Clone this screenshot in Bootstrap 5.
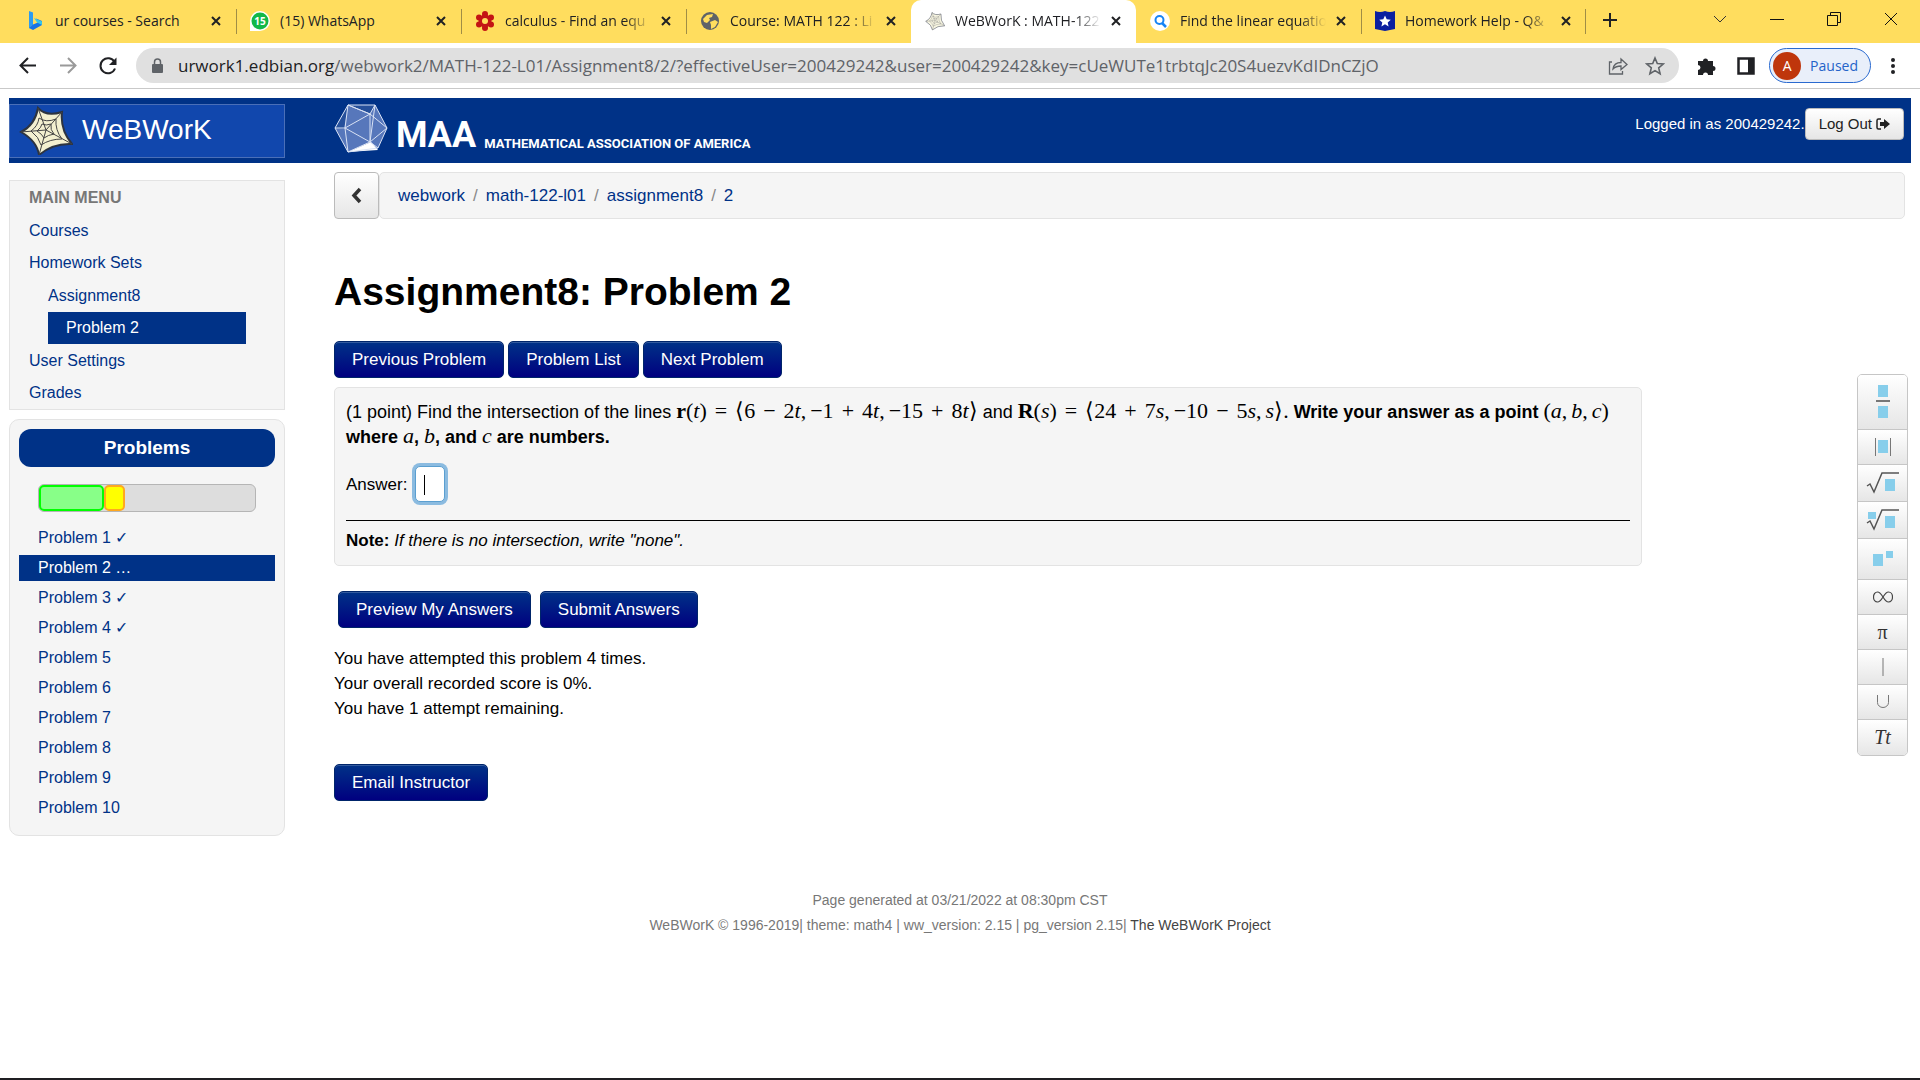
<!DOCTYPE html>
<html lang="en">
<head>
<meta charset="utf-8">
<meta name="viewport" content="width=device-width, initial-scale=1">
<title>WeBWorK : MATH-122-L01 : Assignment8 : 2</title>
<link href="https://cdn.jsdelivr.net/npm/bootstrap@5.3.0/dist/css/bootstrap.min.css" rel="stylesheet">
<style>
  :root { --navy: #003287; }
  body { font-family: "Liberation Sans", Arial, sans-serif; font-size: 17px; line-height: 25px; color: #000; background: #fff; border-bottom: 2px solid #1f1e22; }
  a { color: var(--navy); text-decoration: none; }
  svg { display: block; flex: none; }

  /* browser frame */
  .chrome-ui { font-family: "Open Sans", "Noto Sans", sans-serif; color: #202124; }
  .chrome-ui button { background: none; border: 0; padding: 0; color: inherit; }
  .tab-strip { background: #ffdd5e; height: 43px; padding-left: 11px; }
  .tab-item { flex: 0 1 225px; min-width: 0; gap: 10px; padding: 0 15px 2px 14px; height: 43px; font-size: 14px; position: relative; }
  .tab-item + .tab-item:not(.current):not(.after-current)::before, .tab-item.closing::after { content: ""; position: absolute; left: 0; top: 9px; height: 25px; width: 1px; background: #a08d45; }
  .tab-item.closing::after { left: auto; right: 0; }
  .tab-item.current { background: #fff; border-radius: 10px 10px 0 0; }
  .tab-title { flex: 1 1 0; overflow: hidden; white-space: nowrap; }
  .tab-title.fades { -webkit-mask-image: linear-gradient(90deg, #000 82%, transparent); mask-image: linear-gradient(90deg, #000 82%, transparent); }
  .window-keys { gap: 43px; padding: 0 22px 6px 0; }
  .tool-row { height: 46px; padding: 0 17px 0 18px; border-bottom: 1px solid #c9c9c9; }
  .nav-keys { gap: 20px; margin-right: 18px; }
  .address { background: #e0e0e0; border-radius: 18px; height: 35px; padding: 0 14px; gap: 13px; }
  .address-text { font-size: 17px; color: #5f6368; white-space: nowrap; overflow: hidden; }
  .address-text b { font-weight: 400; color: #202124; }
  .tool-keys { gap: 20px; margin-left: 17px; }
  .chrome-ui .profile { background: #e9effa; border: 1px solid #2a6ad0; border-radius: 18px; height: 35px; padding: 0 12px 0 3px; gap: 9px; color: #2463c9; font-size: 14px; margin: 0 -8px 0 -7px; }
  .avatar { width: 28px; height: 28px; border-radius: 50%; background: #bf360c; color: #fff; line-height: 28px; }

  /* masthead */
  .page { padding: 9px 9px 0; }
  .masthead { background: var(--navy); height: 65px; padding-right: 7px; }
  .side-w { width: 276px; flex: none; }
  .brand { background: #1147ad; border: 1px solid #4a6fb8; height: 54px; padding: 0 0 2px 8px; gap: 8px; color: #fff; font-size: 28px; }
  .maa { margin-left: 49px; color: #fff; gap: 8px; font-family: Roboto, sans-serif; font-weight: 700; padding-bottom: 3px; }
  .maa-big { font-size: 36px; line-height: 38px; }
  .maa-long { font-size: 13px; line-height: 20px; }
  .login { color: #fff; font-size: 15px; padding-bottom: 14px; }
  .btn-plain { background: linear-gradient(#fff, #e6e6e6); border: 1px solid #bbb; border-radius: 4px; color: #222; }
  .btn-out { font-size: 15px; line-height: 20px; padding: 5px 13px; }

  /* side navigation */
  .well-box { background: #f5f5f5; border: 1px solid #e3e3e3; }
  .main-menu { margin-top: 17px; font-size: 16px; padding-top: 1px; }
  .main-menu h2 { font-size: 16px; line-height: 32px; margin: 0 0 1px; padding-left: 19px; font-weight: 700; color: #777; }
  .main-menu a { display: block; line-height: 32px; padding-left: 19px; }
  .main-menu ul ul { margin: 1px 38px 1px 38px; }
  .main-menu ul ul a { padding-left: 0; }
  .main-menu ul ul a.here { padding-left: 18px; }
  a.here { background: var(--navy); color: #fff; }
  .problem-box { margin-top: 9px; border-radius: 10px; padding: 9px 9px 10px; font-size: 16px; }
  .problem-box h2 { background: var(--navy); color: #fff; font-size: 19px; line-height: 38px; font-weight: 700; border-radius: 12px; margin: 0 0 17px; text-align: center; }
  .meter { margin: 0 19px 13px; height: 28px; background: #ddd; border: 1px solid #b5b5b5; border-radius: 6px; }
  .meter div { border: 2px solid #0f0; background: #8f8; border-radius: 5px; }
  .meter div + div { border-color: #ffa81f; background: #ff0; }
  .problem-box a { display: block; line-height: 26px; margin-bottom: 4px; padding-left: 19px; }

  /* main column */
  .main-col { margin-left: 49px; padding-top: 9px; min-width: 0; }
  .btn-back { width: 45px; height: 47px; }
  .trail { border-radius: 5px; height: 47px; padding: 0 18px; line-height: 45px; margin: 0 6px 0 0; }
  .trail .breadcrumb-item + .breadcrumb-item { padding-left: 8px; }
  .trail .breadcrumb-item + .breadcrumb-item::before { padding-right: 8px; color: #888; }
  h1.set-title { font-size: 39px; line-height: 48px; font-weight: 700; margin: 49px 0 25px; }
  .btn-navy { background: linear-gradient(#003287, #000080); border: 1px solid #00256a; border-radius: 5px; color: #fff; font-size: 17px; line-height: 25px; padding: 5px 17px; box-shadow: inset 0 1px 0 rgba(255,255,255,.2); }
  .btn-navy:hover, .btn-navy:focus { color: #fff; background: linear-gradient(#003287, #000080); }
  .nav-row { gap: 4px; }
  .statement { margin: 9px 0 25px; padding: 12px 11px; border-radius: 5px; }
  .question { font-size: 18px; }
  .math { font-family: "Liberation Serif", serif; font-size: 22px; line-height: 20px; white-space: nowrap; font-weight: 400; }
  .math s { text-decoration: none; margin: 0 8px; }
  .math u { text-decoration: none; margin-right: 4px; }
  .answer-row { margin-top: 16px; gap: 5px; }
  .answer-box { width: 30px; height: 36px; border: 1px solid #5b9fd0; border-radius: 5px; outline: 0; box-shadow: 0 0 0 3px #8bbbe0; background: linear-gradient(#000, #000) 8px 8px / 1px 20px no-repeat #fff; padding: 4px; margin: 0 3px; }
  .statement hr { margin: 18px 0 7px; border-top: 1px solid #000; opacity: 1; }
  .send-row { gap: 9px; padding-left: 4px; margin-bottom: 18px; }
  .attempts { margin-bottom: 43px; }

  /* equation palette */
  .palette { width: 51px; flex: none; margin: 33px 3px 0 215px; align-self: flex-start; border: 1px solid #c6c6c6; border-radius: 5px; overflow: hidden; }
  .palette button { border: 0; border-bottom: 1px solid #c6c6c6; background: linear-gradient(#fff, #e6e6e6); padding: 0; height: 35px; color: #333; display: flex; align-items: center; justify-content: center; font-family: "Liberation Serif", serif; font-size: 20px; }
  .palette button:last-child { border-bottom: 0; }
  .palette .tall { height: 55px; }
  .palette .mid { height: 37px; }
  .palette .sup { height: 41px; }
  .credits { color: #777; font-size: 14px; margin-top: 52px; }
  .credits a { color: #444; }
</style>
</head>
<body class="d-flex flex-column min-vh-100">

<svg width="0" height="0" class="position-absolute" aria-hidden="true">
  <symbol id="cross" viewBox="0 0 10 10"><path d="M1 1l8 8M9 1L1 9" stroke="#202124" stroke-width="2" fill="none"/></symbol>
  <symbol id="web" viewBox="0 0 54 52">
    <path d="M19 3Q27 12 43 7Q41 25 53 39Q34 38 20 50Q18 36 2 27Q16 20 19 3Z" fill="#f3f0d0" stroke="#2d3440" stroke-width="2"/>
    <path d="M19 3L27 25L43 7M27 25L53 39M27 25L20 50M27 25L2 27M20 13Q27 18 37 14Q36 25 43 34Q31 34 22 40Q20 32 12 26Q19 21 20 13M23 19Q27 21 32 19Q31 25 35 29Q29 30 25 33Q23 29 18 26Q22 23 23 19" fill="none" stroke="#444" stroke-width="1"/>
  </symbol>
</svg>

<header class="chrome-ui">
  <div class="tab-strip d-flex">
    <div class="tab-item d-flex align-items-center">
      <svg width="20" height="22" viewBox="0 0 20 22"><path d="M4 1l4 1.500v12l-4 4z" fill="#2d9cf0"/><path d="M4 18l4-3.500 5-2-2-4 6 2.500v4L8 20z" fill="#1673e6"/><path d="M9 8l8 3.500V15l-5-2.500z" fill="#37c6e8"/></svg>
      <span class="tab-title">ur courses - Search</span><button aria-label="Close"><svg width="10" height="10"><use href="#cross"/></svg></button>
    </div>
    <div class="tab-item d-flex align-items-center">
      <svg width="20" height="20" viewBox="0 0 20 20"><path d="M0 20V10A10 10 0 1 1 10 20z" fill="#fff"/><circle cx="10" cy="10" r="8.500" fill="#12b848"/><text x="10" y="14" font-size="10" font-weight="700" fill="#fff" text-anchor="middle">15</text></svg>
      <span class="tab-title">(15) WhatsApp</span><button aria-label="Close"><svg width="10" height="10"><use href="#cross"/></svg></button>
    </div>
    <div class="tab-item d-flex align-items-center">
      <svg width="20" height="20" viewBox="0 0 20 20"><g fill="#c41414"><circle cx="10" cy="3" r="3"/><circle cx="10" cy="17" r="3"/><circle cx="4" cy="6.500" r="3"/><circle cx="16" cy="6.500" r="3"/><circle cx="4" cy="13.500" r="3"/><circle cx="16" cy="13.500" r="3"/><circle cx="10" cy="10" r="6.500"/></g><circle cx="10" cy="10" r="3" fill="#ffdd5e"/></svg>
      <span class="tab-title fades">calculus - Find an equ</span><button aria-label="Close"><svg width="10" height="10"><use href="#cross"/></svg></button>
    </div>
    <div class="tab-item d-flex align-items-center">
      <svg width="20" height="20" viewBox="0 0 20 20"><circle cx="10" cy="10" r="9" fill="#5f6368"/><path d="M3 8l4-4 6-1-1 3-3 1 1 2-3 3-3-1zM10 11l5-2 3 2-3 5-4 2v-4z" fill="#ffdd5e"/></svg>
      <span class="tab-title fades">Course: MATH 122 : Li</span><button aria-label="Close"><svg width="10" height="10"><use href="#cross"/></svg></button>
    </div>
    <div class="tab-item current d-flex align-items-center">
      <svg width="20" height="20" opacity=".65"><use href="#web"/></svg>
      <span class="tab-title fades">WeBWorK : MATH-122</span><button aria-label="Close"><svg width="10" height="10"><use href="#cross"/></svg></button>
    </div>
    <div class="tab-item after-current d-flex align-items-center">
      <svg width="20" height="20" viewBox="0 0 20 20"><circle cx="10" cy="10" r="10" fill="#fff"/><circle cx="9.500" cy="9" r="4" fill="none" stroke="#1683f5" stroke-width="2"/><path d="M12 12l4 4" stroke="#1683f5" stroke-width="2.500"/></svg>
      <span class="tab-title fades">Find the linear equatio</span><button aria-label="Close"><svg width="10" height="10"><use href="#cross"/></svg></button>
    </div>
    <div class="tab-item closing d-flex align-items-center">
      <svg width="20" height="20" viewBox="0 0 20 20"><path d="M0 0q5 2 10 0 5 2 10 0v18l-10 2-10-2z" fill="#0b1fa0"/><path d="M10 4.500l1.700 3.800 4.100.4-3.100 2.700.9 4-3.600-2.100-3.600 2.100.9-4-3.100-2.700 4.100-.4z" fill="#fff"/></svg>
      <span class="tab-title fades">Homework Help - Q&amp;</span><button aria-label="Close"><svg width="10" height="10"><use href="#cross"/></svg></button>
    </div>
    <button aria-label="New tab" class="ms-3 pb-1"><svg width="16" height="16" viewBox="0 0 16 16"><path d="M8 1v14M1 8h14" stroke="#202124" stroke-width="2"/></svg></button>
    <div class="window-keys d-flex ms-auto">
      <button aria-label="Search tabs"><svg width="14" height="14" viewBox="0 0 14 14"><path d="M1 4l6 6 6-6" fill="none" stroke="#333"/></svg></button>
      <button aria-label="Minimize"><svg width="14" height="14" viewBox="0 0 14 14"><path d="M0 7.500h14" stroke="#111"/></svg></button>
      <button aria-label="Restore"><svg width="14" height="14" viewBox="0 0 14 14"><path d="M.5 3.500h10v10H.5zM3.500 3.500v-3h10v10h-3" fill="none" stroke="#111"/></svg></button>
      <button aria-label="Close window"><svg width="14" height="14" viewBox="0 0 14 14"><path d="M1 1l12 12M13 1L1 13" stroke="#111"/></svg></button>
    </div>
  </div>
  <div class="tool-row d-flex align-items-center">
    <div class="nav-keys d-flex">
      <button aria-label="Back"><svg width="20" height="20" viewBox="0 0 20 20"><path d="M18 9.500H3M10 2L2.500 9.500 10 17" fill="none" stroke="#202124" stroke-width="2"/></svg></button>
      <button aria-label="Forward"><svg width="20" height="20" viewBox="0 0 20 20"><path d="M2 9.500h15M10 2l7.500 7.500L10 17" fill="none" stroke="#9a9a9a" stroke-width="2"/></svg></button>
      <button aria-label="Reload"><svg width="20" height="20" viewBox="0 0 20 20"><path d="M16.500 6A7.500 7.500 0 1 0 17 12.500" fill="none" stroke="#202124" stroke-width="2"/><path d="M18.500 1.500v7.500H11z" fill="#202124"/></svg></button>
    </div>
    <div class="address d-flex align-items-center flex-fill">
      <svg width="15" height="16" viewBox="0 0 15 16"><rect x="2" y="6" width="11" height="9" rx="1" fill="#5f6368"/><path d="M4.500 7V4a3 3 0 0 1 6 0v3" fill="none" stroke="#5f6368" stroke-width="1.500"/></svg>
      <div class="address-text flex-fill" role="textbox" aria-label="Address"><b>urwork1.edbian.org</b>/webwork2/MATH-122-L01/Assignment8/2/?effectiveUser=200429242&amp;user=200429242&amp;key=cUeWUTe1trbtqJc20S4uezvKdIDnCZjO</div>
      <button aria-label="Share"><svg width="20" height="18" viewBox="0 0 20 18"><path d="M4 5H1.500v12h13v-3M5 12q1-6.500 8-6.500V2l6 5.500-6 5V9q-5 0-8 3z" fill="none" stroke="#5f6368" stroke-width="1.300"/></svg></button>
      <button aria-label="Bookmark" class="ms-1"><svg width="20" height="20" viewBox="0 0 20 20"><path d="M10 2l2.300 5.500 6 .5-4.600 3.900 1.400 5.800L10 14.600l-5.100 3.100 1.400-5.800L1.700 8l6-.5z" fill="none" stroke="#5f6368" stroke-width="1.600"/></svg></button>
    </div>
    <div class="tool-keys d-flex align-items-center">
      <button aria-label="Extensions"><svg width="20" height="20" viewBox="0 0 20 20"><path d="M2 5h5a2.500 2.500 0 1 1 5 0h5v5a2.500 2.500 0 1 1 0 5v4h-5a2.500 2.500 0 0 0-5 0H2v-5a2.500 2.500 0 0 0 0-5z" fill="#202124"/></svg></button>
      <button aria-label="Side panel"><svg width="20" height="20" viewBox="0 0 20 20"><rect x="2.500" y="2.500" width="15" height="15" fill="none" stroke="#202124" stroke-width="2.500"/><path d="M12 2h6v16h-6z" fill="#202124"/></svg></button>
      <button class="profile d-flex align-items-center"><span class="avatar">A</span>Paused</button>
      <button aria-label="Menu"><svg width="20" height="20" viewBox="0 0 20 20"><g fill="#202124"><circle cx="10" cy="4" r="2"/><circle cx="10" cy="10" r="2"/><circle cx="10" cy="16" r="2"/></g></svg></button>
    </div>
  </div>
</header>

<div class="page flex-fill">
  <div class="masthead d-flex align-items-center">
    <a href="#" class="brand side-w d-flex align-items-center"><svg width="56" height="50" viewBox="0 0 54 50"><use href="#web" width="54" height="52"/></svg>WeBWorK</a>
    <a href="#" class="maa d-flex align-items-end">
      <svg width="54" height="50" viewBox="0 0 54 50"><path d="M14 1h27l12 23-9 20-30 4L1 24z" fill="#5777bb"/><path d="M36 10L14 1h27zM1 24L14 1l-4 24z" fill="#26509b"/><path d="M14 48l23-10 7 8z" fill="#fff"/><path d="M14 1h27l12 23-9 20-30 4L1 24zM14 1l-3 23 25-14zM41 1l-5 9 17 14-17 14zM36 10v28L11 24l3 24 22-10 8 6M1 24h10M14 1l22 9" fill="none" stroke="#d9e2f4"/></svg>
      <span class="maa-big">MAA</span><span class="maa-long">MATHEMATICAL ASSOCIATION OF AMERICA</span>
    </a>
    <div class="login d-flex align-items-center ms-auto"><span>Logged in as 200429242.</span><button class="btn btn-plain btn-out d-flex align-items-center">Log Out<svg width="14" height="12" viewBox="0 0 14 12" class="ms-1"><path d="M5 1H2.500Q1 1 1 2.500v7Q1 11 2.500 11H5" fill="none" stroke="#222" stroke-width="1.500"/><path d="M4 4h4V1l6 5-6 5V8H4z" fill="#222"/></svg></button></div>
  </div>

  <div class="d-flex">
    <nav class="side-w">
      <div class="well-box main-menu">
        <h2>MAIN MENU</h2>
        <ul class="list-unstyled m-0">
          <li><a href="#">Courses</a></li>
          <li><a href="#">Homework Sets</a>
            <ul class="list-unstyled"><li><a href="#">Assignment8</a></li><li><a href="#" class="here">Problem 2</a></li></ul></li>
          <li><a href="#">User Settings</a></li>
          <li><a href="#">Grades</a></li>
        </ul>
      </div>
      <div class="well-box problem-box">
        <h2>Problems</h2>
        <div class="meter d-flex"><div style="width:30%"></div><div style="width:10%"></div></div>
        <a href="#">Problem 1 ✓</a><a href="#" class="here">Problem 2 …</a><a href="#">Problem 3 ✓</a><a href="#">Problem 4 ✓</a><a href="#">Problem 5</a><a href="#">Problem 6</a><a href="#">Problem 7</a><a href="#">Problem 8</a><a href="#">Problem 9</a><a href="#">Problem 10</a>
      </div>
    </nav>

    <main class="main-col flex-fill">
      <div class="d-flex">
        <button class="btn btn-plain btn-back d-flex align-items-center justify-content-center" aria-label="Back"><svg width="12" height="18" viewBox="0 0 12 18"><path d="M9 2L3 8.500 9 15" fill="none" stroke="#333" stroke-width="3.500"/></svg></button>
        <ol class="breadcrumb trail well-box flex-fill">
          <li class="breadcrumb-item"><a href="#">webwork</a></li><li class="breadcrumb-item"><a href="#">math-122-l01</a></li><li class="breadcrumb-item"><a href="#">assignment8</a></li><li class="breadcrumb-item"><a href="#">2</a></li>
        </ol>
      </div>
      <h1 class="set-title">Assignment8: Problem 2</h1>
      <div class="d-flex">
        <div class="flex-fill">
          <div class="nav-row d-flex"><button class="btn btn-navy">Previous Problem</button><button class="btn btn-navy">Problem List</button><button class="btn btn-navy">Next Problem</button></div>
          <div class="well-box statement">
            <div class="question">(1 point) Find the intersection of the lines <span class="math"><b>r</b>(<i>t</i>)<s>=</s>⟨6<s>−</s>2<i>t</i><u>,</u>−1<s>+</s>4<i>t</i><u>,</u>−15<s>+</s>8<i>t</i>⟩</span> and <span class="math"><b>R</b>(<i>s</i>)<s>=</s>⟨24<s>+</s>7<i>s</i><u>,</u>−10<s>−</s>5<i>s</i><u>,</u><i>s</i>⟩.</span> <b>Write your answer as a point <span class="math">(<i>a</i><u>,</u><i>b</i><u>,</u><i>c</i>)</span> where <span class="math"><i>a</i></span>, <span class="math"><i>b</i></span>, and <span class="math"><i>c</i></span> are numbers.</b></div>
            <div class="answer-row d-flex align-items-center"><label for="answer">Answer:</label><input id="answer" class="answer-box" type="text"></div>
            <hr>
            <div><b>Note:</b> <i>If there is no intersection, write "none".</i></div>
          </div>
          <div class="send-row d-flex"><button class="btn btn-navy">Preview My Answers</button><button class="btn btn-navy">Submit Answers</button></div>
          <p class="attempts">You have attempted this problem 4 times.<br>Your overall recorded score is 0%.<br>You have 1 attempt remaining.</p>
          <button class="btn btn-navy">Email Instructor</button>
        </div>
        <div class="palette d-flex flex-column">
          <button class="tall" aria-label="Fraction"><svg width="14" height="34" viewBox="0 0 14 34"><path d="M2 0h10v12H2zM2 21h10v12H2z" fill="#87ceeb"/><path d="M0 16h14" stroke="#777" stroke-width="2"/></svg></button>
          <button aria-label="Absolute value"><svg width="16" height="18" viewBox="0 0 16 18"><path d="M3 2h10v13H3z" fill="#87ceeb"/><path d="M.5 0v18M15.500 0v18" stroke="#777"/></svg></button>
          <button class="mid" aria-label="Square root"><svg width="34" height="22" viewBox="0 0 34 22"><path d="M1 14l3-2 4 8 8-19h17" fill="none" stroke="#555" stroke-width="1.500"/><path d="M19 7h10v12H19z" fill="#87ceeb"/></svg></button>
          <button class="mid" aria-label="Nth root"><svg width="34" height="22" viewBox="0 0 34 22"><path d="M2 3h8v7H2z" fill="#87ceeb"/><path d="M1 14l3-2 4 8 8-19h17" fill="none" stroke="#555" stroke-width="1.500"/><path d="M19 7h10v12H19z" fill="#87ceeb"/></svg></button>
          <button class="sup" aria-label="Exponent"><svg width="22" height="18" viewBox="0 0 22 18"><path d="M1 4h10v12H1zM14 1h7v7h-7z" fill="#87ceeb"/></svg></button>
          <button aria-label="Infinity"><svg width="20" height="12" viewBox="0 0 20 12"><path d="M10 6Q7 1 4.500 1A4 5 0 0 0 4.500 11Q7 11 10 6T15.500 1A4 5 0 0 1 15.500 11Q13 11 10 6z" fill="none" stroke="#444" stroke-width="1.200"/></svg></button>
          <button>π</button>
          <button aria-label="Such that"><svg width="2" height="18"><path d="M1 0v18" stroke="#777"/></svg></button>
          <button aria-label="Union"><svg width="14" height="14" viewBox="0 0 14 14"><path d="M1.500 0v7.500a5.500 5 0 0 0 11 0V0" fill="none" stroke="#777"/></svg></button>
          <button><i>Tt</i></button>
        </div>
      </div>
    </main>
  </div>
  <footer class="credits text-center">Page generated at 03/21/2022 at 08:30pm CST<br>WeBWorK © 1996-2019| theme: math4 | ww_version: 2.15 | pg_version 2.15| <a href="#">The WeBWorK Project</a></footer>
</div>
<script src="https://cdn.jsdelivr.net/npm/bootstrap@5.3.0/dist/js/bootstrap.bundle.min.js"></script>
</body>
</html>
